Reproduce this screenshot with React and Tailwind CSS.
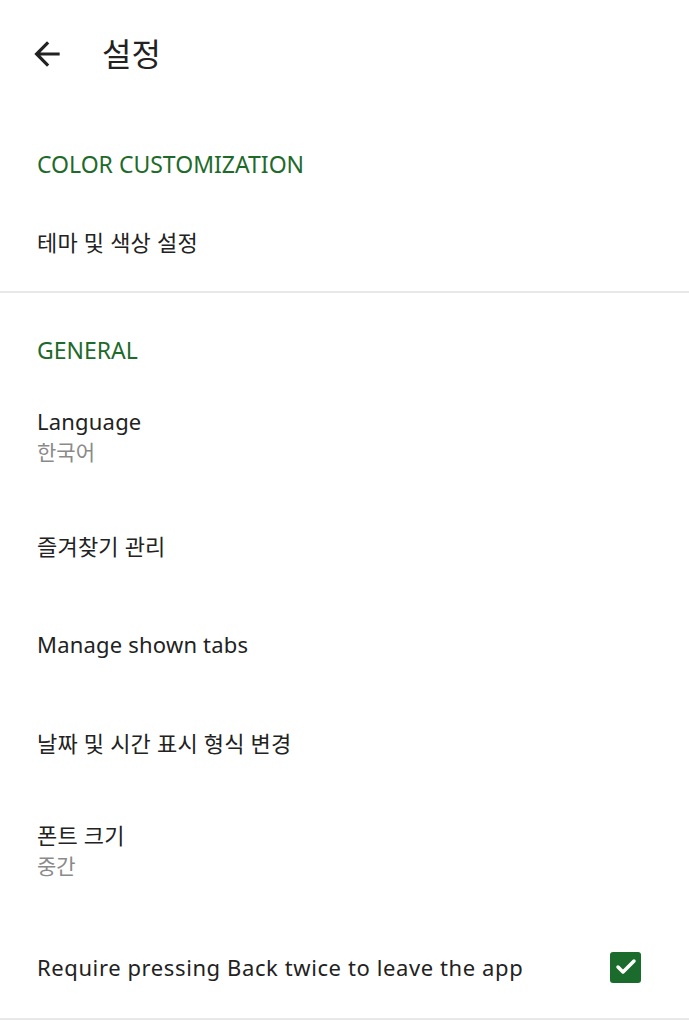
import { Check } from "lucide-react";

const font = { fontFamily: '"Noto Sans", "Noto Sans CJK KR", sans-serif' };

function SectionLabel({ children, className }) {
  return (
    <div className={`flex items-center px-[37px] text-[23px] text-[#1e6a2a] ${className}`}>
      {children}
    </div>
  );
}

function Row({ title, className }) {
  return (
    <div className={`flex items-center px-[37px] text-[22px] tracking-[0.2px] text-[#222] ${className}`}>
      {title}
    </div>
  );
}

function TwoLineRow({ title, sub, className }) {
  return (
    <div className={`flex flex-col px-[37px] ${className}`}>
      <div className="text-[22px] leading-[31px] tracking-[0.2px] text-[#222]">{title}</div>
      <div className="text-[21px] leading-[31px] text-[#8a8a8a]">{sub}</div>
    </div>
  );
}

export default function App() {
  return (
    <div className="w-[689px] h-[1024px] bg-white overflow-hidden" style={font}>
      <div className="h-[108px] flex items-center">
        <svg viewBox="0 0 24 24" className="w-[38px] h-[38px] ml-[28px] fill-[#222]">
          <path d="M20 11H7.83l5.59-5.59L12 4l-8 8 8 8 1.41-1.41L7.83 13H20v-2z" />
        </svg>
        <div className="ml-[36px] text-[32px] text-[#222]">설정</div>
      </div>

      <SectionLabel className="h-[112px]">COLOR CUSTOMIZATION</SectionLabel>
      <Row title="테마 및 색상 설정" className="h-[44px]" />
      <div className="mt-[27px] h-[2px] bg-[#e8e8e8]" />

      <SectionLabel className="mt-[21px] h-[72px]">GENERAL</SectionLabel>
      <TwoLineRow title="Language" sub="한국어" className="h-[111px] pt-[20px]" />
      <Row title="즐겨찾기 관리" className="h-[98px]" />
      <Row title="Manage shown tabs" className="h-[99px]" />
      <Row title="날짜 및 시간 표시 형식 변경" className="h-[98px]" />
      <TwoLineRow title="폰트 크기" sub="중간" className="h-[126px] pt-[28px]" />

      <div className="h-[98px] flex items-center justify-between pl-[37px] pr-[48px]">
        <span className="text-[22px] tracking-[0.6px] text-[#222]">Require pressing Back twice to leave the app</span>
        <div className="w-[31px] h-[31px] rounded-[3px] bg-[#1b6b2c] flex items-center justify-center">
          <Check size={24} strokeWidth={3.5} color="#fff" />
        </div>
      </div>
      <div className="mt-[2px] h-[2px] bg-[#e8e8e8]" />
    </div>
  );
}
